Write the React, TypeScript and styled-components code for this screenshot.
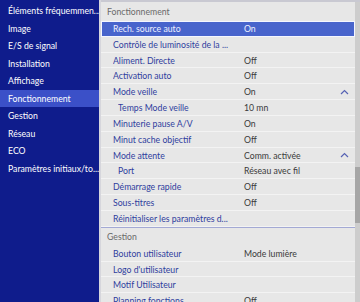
import styled, { createGlobalStyle } from "styled-components";

const GlobalStyle = createGlobalStyle`
	html, body {
		margin: 0;
		padding: 0;
		background: #d6d6d6;
	}
	body {
		font-family: Lato, "Noto Sans", sans-serif;
		font-size: 8.7px;
	}
`;

const Screen = styled.div`
	display: flex;
	width: 360px;
	height: 302px;
	overflow: hidden;
	background: #d6d6dc;
`;

const Nav = styled.nav`
	flex: 0 0 99px;
	width: 99px;
	min-width: 0;
	display: flex;
	flex-direction: column;
	padding-top: 2px;
	background: #0f1c8c;
	overflow: hidden;
`;

const NavItem = styled.div<{ $active?: boolean }>`
	flex: 0 0 17.56px;
	line-height: 17.56px;
	padding-left: 8px;
	color: #ffffff;
	white-space: nowrap;
	overflow: hidden;
	background: ${(p) => (p.$active ? "#3b50c8" : "transparent")};
`;

const Panel = styled.section`
	flex: 1;
	min-width: 0;
	display: flex;
	margin-left: 2px;
	border-top: 2px solid #c9c9d2;
	background: #e7e7e7;
	overflow: hidden;
`;

const List = styled.div`
	flex: 1;
	min-width: 0;
	display: flex;
	flex-direction: column;
`;

const Header = styled.div<{ $divider?: boolean }>`
	flex: 0 0 auto;
	height: ${(p) => (p.$divider ? 18 : 19)}px;
	line-height: ${(p) => (p.$divider ? 18 : 19)}px;
	padding-left: 6px;
	color: #6a6a6a;
	border-top: ${(p) => (p.$divider ? "1px solid #a3a9d4" : "none")};
`;

const Row = styled.div<{ $selected?: boolean; $indent?: boolean }>`
	flex: 0 0 auto;
	display: flex;
	align-items: center;
	height: 14.84px;
	border-bottom: 1px solid #f3f3f3;
	padding-left: ${(p) => (p.$indent ? 17 : 12)}px;
	background: ${(p) => (p.$selected ? "#4864cc" : "transparent")};
	outline: ${(p) => (p.$selected ? "1px solid #f4f6ff" : "none")};
	outline-offset: -1px;
`;

const Label = styled.span<{ $selected?: boolean; $indent?: boolean }>`
	flex: 0 0 ${(p) => (p.$indent ? 126 : 131)}px;
	color: ${(p) => (p.$selected ? "#eef0ff" : "#2f3e9e")};
	white-space: nowrap;
	overflow: hidden;
`;

const Value = styled.span<{ $selected?: boolean }>`
	flex: 1;
	color: ${(p) => (p.$selected ? "#eef0ff" : "#3a3a3a")};
	white-space: nowrap;
`;

const Caret = styled.svg`
	flex: 0 0 auto;
	width: 9px;
	height: 6px;
	margin-right: 6px;
`;

const Track = styled.div`
	flex: 0 0 5px;
	display: flex;
	flex-direction: column;
	background: #cdcdcd;
`;

const Thumb = styled.div`
	margin-top: 165px;
	height: 56px;
	background: #a6a6a6;
`;

type Item = { label: string; value?: string; indent?: boolean; open?: boolean; selected?: boolean };

const nav = [
	"Éléments fréquemmen...",
	"Image",
	"E/S de signal",
	"Installation",
	"Affichage",
	"Fonctionnement",
	"Gestion",
	"Réseau",
	"ECO",
	"Paramètres initiaux/to...",
];

const operation: Item[] = [
	{ label: "Rech. source auto", value: "On", selected: true },
	{ label: "Contrôle de luminosité de la ..." },
	{ label: "Aliment. Directe", value: "Off" },
	{ label: "Activation auto", value: "Off" },
	{ label: "Mode veille", value: "On", open: true },
	{ label: "Temps Mode veille", value: "10 mn", indent: true },
	{ label: "Minuterie pause A/V", value: "On" },
	{ label: "Minut cache objectif", value: "Off" },
	{ label: "Mode attente", value: "Comm. activée", open: true },
	{ label: "Port", value: "Réseau avec fil", indent: true },
	{ label: "Démarrage rapide", value: "Off" },
	{ label: "Sous-titres", value: "Off" },
	{ label: "Réinitialiser les paramètres d..." },
];

const management: Item[] = [
	{ label: "Bouton utilisateur", value: "Mode lumière" },
	{ label: "Logo d'utilisateur" },
	{ label: "Motif Utilisateur" },
	{ label: "Planning fonctions", value: "Off" },
];

function SettingRow({ item }: { item: Item }) {
	return (
		<Row $selected={item.selected} $indent={item.indent}>
			<Label $selected={item.selected} $indent={item.indent}>
				{item.label}
			</Label>
			<Value $selected={item.selected}>{item.value}</Value>
			{item.open && (
				<Caret viewBox="0 0 9 6">
					<polyline points="1,5 4.5,1.5 8,5" fill="none" stroke="#5662b4" strokeWidth="1.2" />
				</Caret>
			)}
		</Row>
	);
}

export default function App() {
	return (
		<>
			<GlobalStyle />
			<Screen>
				<Nav>
					{nav.map((n) => (
						<NavItem key={n} $active={n === "Fonctionnement"}>
							{n}
						</NavItem>
					))}
				</Nav>
				<Panel>
					<List>
						<Header>Fonctionnement</Header>
						{operation.map((it) => (
							<SettingRow key={it.label} item={it} />
						))}
						<Header $divider>Gestion</Header>
						{management.map((it) => (
							<SettingRow key={it.label} item={it} />
						))}
					</List>
					<Track>
						<Thumb />
					</Track>
				</Panel>
			</Screen>
		</>
	);
}
